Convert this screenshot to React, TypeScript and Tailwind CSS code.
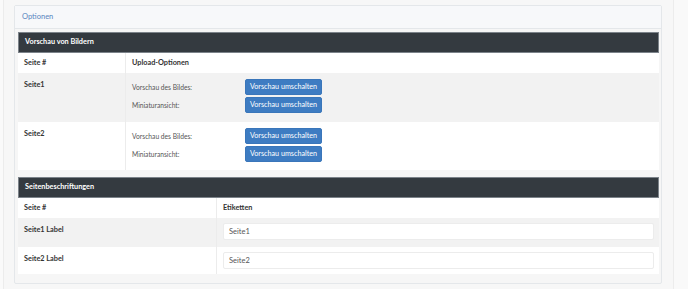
import React from "react";

const font = { fontFamily: 'Lato, "Open Sans", sans-serif' };

function Btn() {
  return (
    <button className="h-[16px] w-[77px] px-0 rounded-[2px] bg-[#3e7cc2] border border-[#3a76ba] text-white text-[7.2px] leading-none whitespace-nowrap flex items-center justify-center">
      Vorschau umschalten
    </button>
  );
}

function PreviewRow({ name, gray }: { name: string; gray: boolean }) {
  return (
    <div className={`flex ${gray ? "bg-[#f2f2f2] h-[49px]" : "bg-white h-[48px]"}`}>
      <div className="w-[107px] pl-[6px] pt-[7px] text-[7.3px] font-bold text-[#333]">{name}</div>
      <div className="flex-1 border-l border-[#ececec] pl-[6px] pt-[6px] flex flex-col gap-[2px]">
        <div className="flex items-center h-[16px]">
          <span className="w-[113px] text-[6.7px] text-[#555]">Vorschau des Bildes:</span>
          <Btn />
        </div>
        <div className="flex items-center h-[16px]">
          <span className="w-[113px] text-[6.7px] text-[#555]">Miniaturansicht:</span>
          <Btn />
        </div>
      </div>
    </div>
  );
}

function DarkHead({ title }: { title: string }) {
  return (
    <div className="h-[21px] bg-[#343a40] border border-[#7c838a] flex items-center pl-[6px] text-white text-[7.3px] font-bold">
      {title}
    </div>
  );
}

function LabelRow({ name, value, gray }: { name: string; value: string; gray: boolean }) {
  return (
    <div className={`flex ${gray ? "bg-[#f2f2f2] h-[29px]" : "bg-white h-[27px]"}`}>
      <div className="w-[198px] pl-[6px] pt-[7px] text-[7.3px] font-bold text-[#333]">{name}</div>
      <div className="flex-1 border-l border-[#ececec] pl-[6px] pr-[5px] pt-[5px]">
        <div className="h-[17px] bg-white border border-[#ececec] rounded-[2px] flex items-center pl-[5px] text-[7.5px] text-[#555]">
          {value}
        </div>
      </div>
    </div>
  );
}

export default function App() {
  return (
    <div className="w-[688px] h-[289px] bg-[#f9f9f9] flex overflow-hidden" style={font}>
      <div className="w-[3px] bg-[#fafafa]" />
      <div className="w-[671px] h-full bg-[#f7f7f7] border-l border-r border-[#ececec] pl-[10px] pr-[10px] pt-[5px]">
        <div className="w-[648px] border border-[#e4e7ea] rounded-[2px] bg-[#f6f6f6]">
          <div className="h-[23px] bg-[#f7f8fa] border-b border-[#e4e7ea] flex items-center pl-[7px] text-[7.5px] text-[#5a86c0]">
            Optionen
          </div>
          <div className="pl-[3px] pr-[2px] pt-[3px] pb-[9px]">
            <DarkHead title="Vorschau von Bildern" />
            <div className="flex h-[20px] bg-white items-center text-[7.3px] font-bold text-[#333]">
              <div className="w-[107px] pl-[6px] h-full flex items-center">Seite #</div>
              <div className="flex-1 pl-[6px] h-full flex items-center border-l border-[#ececec]">Upload-Optionen</div>
            </div>
            <PreviewRow name="Seite1" gray={true} />
            <PreviewRow name="Seite2" gray={false} />
            <div className="h-[7px]" />
            <DarkHead title="Seitenbeschriftungen" />
            <div className="flex h-[20px] bg-white items-center text-[7.3px] font-bold text-[#333]">
              <div className="w-[198px] pl-[6px] h-full flex items-center">Seite #</div>
              <div className="flex-1 pl-[6px] h-full flex items-center border-l border-[#ececec]">Etiketten</div>
            </div>
            <LabelRow name="Seite1 Label" value="Seite1" gray={true} />
            <LabelRow name="Seite2 Label" value="Seite2" gray={false} />
          </div>
        </div>
      </div>
    </div>
  );
}
